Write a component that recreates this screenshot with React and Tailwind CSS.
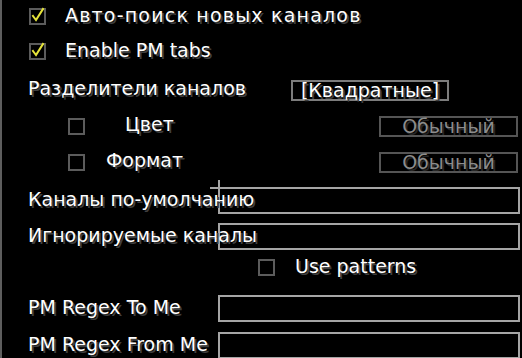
import React from 'react';

const font = { fontFamily: '"DejaVu Sans", "Liberation Sans", sans-serif' };

const Check = ({ checked }) => (
    <div className="relative w-[17px] h-[17px] border-2 border-[#5c5c5c] shrink-0">
        {checked && (
            <svg className="absolute left-[-2px] top-[-3px] overflow-visible" width="17" height="17" viewBox="0 0 17 17">
                <polyline points="4,9 7,13 14,2" fill="none" stroke="#e6e43a" strokeWidth="2" strokeLinecap="square" />
            </svg>
        )}
    </div>
);

const Label = ({ children, dim, wide }) => (
    <span
        className={`relative z-10 whitespace-nowrap text-[19px] leading-none ${wide ? 'tracking-[1.2px]' : ''} ${dim ? 'text-[#8c8c8c] [text-shadow:2px_2px_0_#262626]' : 'text-white [text-shadow:2px_2px_0_#3f3f3f]'}`}
    >
        {children}
    </span>
);

const Field = ({ marks }) => (
    <div className="relative w-[302px] h-[27px] border-2 border-[#a5a5a5] shrink-0">
        {marks && (
            <>
                <div className="absolute left-[-10px] top-[-2px] w-[10px] h-[2px] bg-[#a5a5a5]" />
                <div className="absolute left-[-2px] top-[-9px] w-[2px] h-[9px] bg-[#a5a5a5]" />
            </>
        )}
    </div>
);

const FieldRow = ({ label, h, marks }) => (
    <div className={`flex items-center ${h}`}>
        <div className="w-[218px] pl-[28px]">
            <Label>{label}</Label>
        </div>
        <Field marks={marks} />
    </div>
);

export default function App() {
    return (
        <div className="w-[522px] h-[358px] overflow-hidden bg-black border-l-2 border-[#5e5e5e]" style={font}>
            <div className="flex items-center h-[33px] pl-[27px]">
                <Check checked />
                <div className="ml-[19px]"><Label wide>Авто-поиск новых каналов</Label></div>
            </div>
            <div className="flex items-center h-[37px] pl-[27px]">
                <Check checked />
                <div className="ml-[19px]"><Label>Enable PM tabs</Label></div>
            </div>
            <div className="flex items-center h-[40px]">
                <div className="w-[289px] pl-[26px]"><Label>Разделители каналов</Label></div>
                <div className="w-[158px] h-[21px] border-2 border-[#7c7c7c] flex items-center justify-center">
                    <Label>[Квадратные]</Label>
                </div>
            </div>
            <div className="flex items-center h-[32px] pl-[66px]">
                <Check />
                <div className="ml-[40px]"><Label>Цвет</Label></div>
                <div className="ml-auto mr-[4px] w-[139px] h-[21px] border-2 border-[#555] flex items-center justify-center">
                    <Label dim>Обычный</Label>
                </div>
            </div>
            <div className="flex items-center h-[40px] pl-[66px]">
                <Check />
                <div className="ml-[21px]"><Label>Формат</Label></div>
                <div className="ml-auto mr-[4px] w-[139px] h-[21px] border-2 border-[#555] flex items-center justify-center">
                    <Label dim>Обычный</Label>
                </div>
            </div>
            <div className="-ml-[2px]">
                <FieldRow label="Каналы по-умолчанию" h="h-[37px]" marks />
                <FieldRow label="Игнорируемые каналы" h="h-[35px]" />
                <div className="flex items-center h-[27px] pl-[258px]">
                    <Check />
                    <div className="ml-[20px]"><Label>Use patterns</Label></div>
                </div>
                <FieldRow label="PM Regex To Me" h="h-[55px]" />
                <FieldRow label="PM Regex From Me" h="h-[19px]" />
            </div>
        </div>
    );
}
